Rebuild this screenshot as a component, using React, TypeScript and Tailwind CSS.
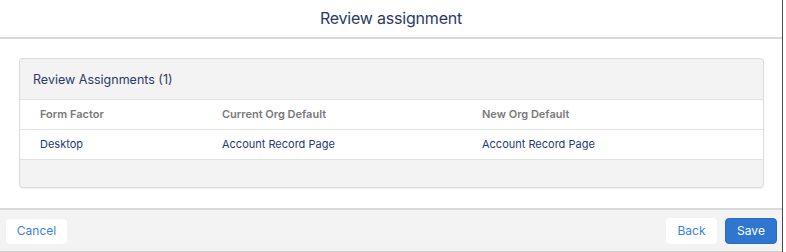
import React from "react";

const rows = [
  { formFactor: "Desktop", current: "Account Record Page", next: "Account Record Page" },
];

export default function App() {
  return (
    <div
      className="w-[786px] h-[252px] bg-white flex"
      style={{ fontFamily: "Inter, 'Liberation Sans', Arial, sans-serif" }}
    >
      <div className="w-[783px] h-[252px] flex flex-col border-r border-[#4a4a4a]">
        {/* header */}
        <div className="h-[39px] shrink-0 flex items-center justify-center border-b-2 border-[#dadada] pb-[2px]">
          <h2 className="text-[16px] text-[#2b3a67] tracking-[-0.2px]">Review assignment</h2>
        </div>

        {/* body */}
        <div className="flex-1 pt-[19px] pl-[19px] pr-[18px]">
          <div className="h-[130px] rounded-[4px] border border-[#dcdcdc] bg-[#f3f3f3] flex flex-col overflow-hidden shadow-[0_1px_1px_rgba(0,0,0,0.06)]">
            <div className="h-[41px] shrink-0 flex items-center pl-[13px] pt-[2px] border-b border-[#e2e2e2]">
              <span className="text-[12.5px] text-[#2b3a67]">Review Assignments (1)</span>
            </div>
            <div className="h-[30px] shrink-0 bg-white grid grid-cols-[182px_260px_1fr] items-center pl-[20px] border-b border-[#e2e2e2]">
              <span className="text-[11px] font-semibold text-[#7a7a7a]">Form Factor</span>
              <span className="text-[11px] font-semibold text-[#7a7a7a]">Current Org Default</span>
              <span className="text-[11px] font-semibold text-[#7a7a7a]">New Org Default</span>
            </div>
            {rows.map((r) => (
              <div
                key={r.formFactor}
                className="h-[30px] shrink-0 bg-white grid grid-cols-[182px_260px_1fr] items-center pl-[20px] border-b border-[#e2e2e2]"
              >
                <span className="text-[11px] text-[#253a78]">{r.formFactor}</span>
                <span className="text-[11px] text-[#253a78]">{r.current}</span>
                <span className="text-[11px] text-[#253a78]">{r.next}</span>
              </div>
            ))}
          </div>
        </div>

        {/* footer */}
        <div className="h-[44px] shrink-0 bg-[#f3f3f3] border-t-2 border-[#d9d9d9] border-b border-b-[#cfcfcf] flex items-center justify-between pl-[6px] pr-[5px] pt-[1px]">
          <button className="w-[61px] h-[25px] rounded-[4px] bg-white text-[12px] text-[#3b82e0]">
            Cancel
          </button>
          <div className="flex gap-[8px]">
            <button className="w-[51px] h-[26px] rounded-[4px] bg-white text-[12px] text-[#3b82e0]">
              Back
            </button>
            <button className="w-[52px] h-[26px] rounded-[4px] bg-[#2e76d0] border border-[#2a6bc0] text-[12px] text-white">
              Save
            </button>
          </div>
        </div>
      </div>
    </div>
  );
}
